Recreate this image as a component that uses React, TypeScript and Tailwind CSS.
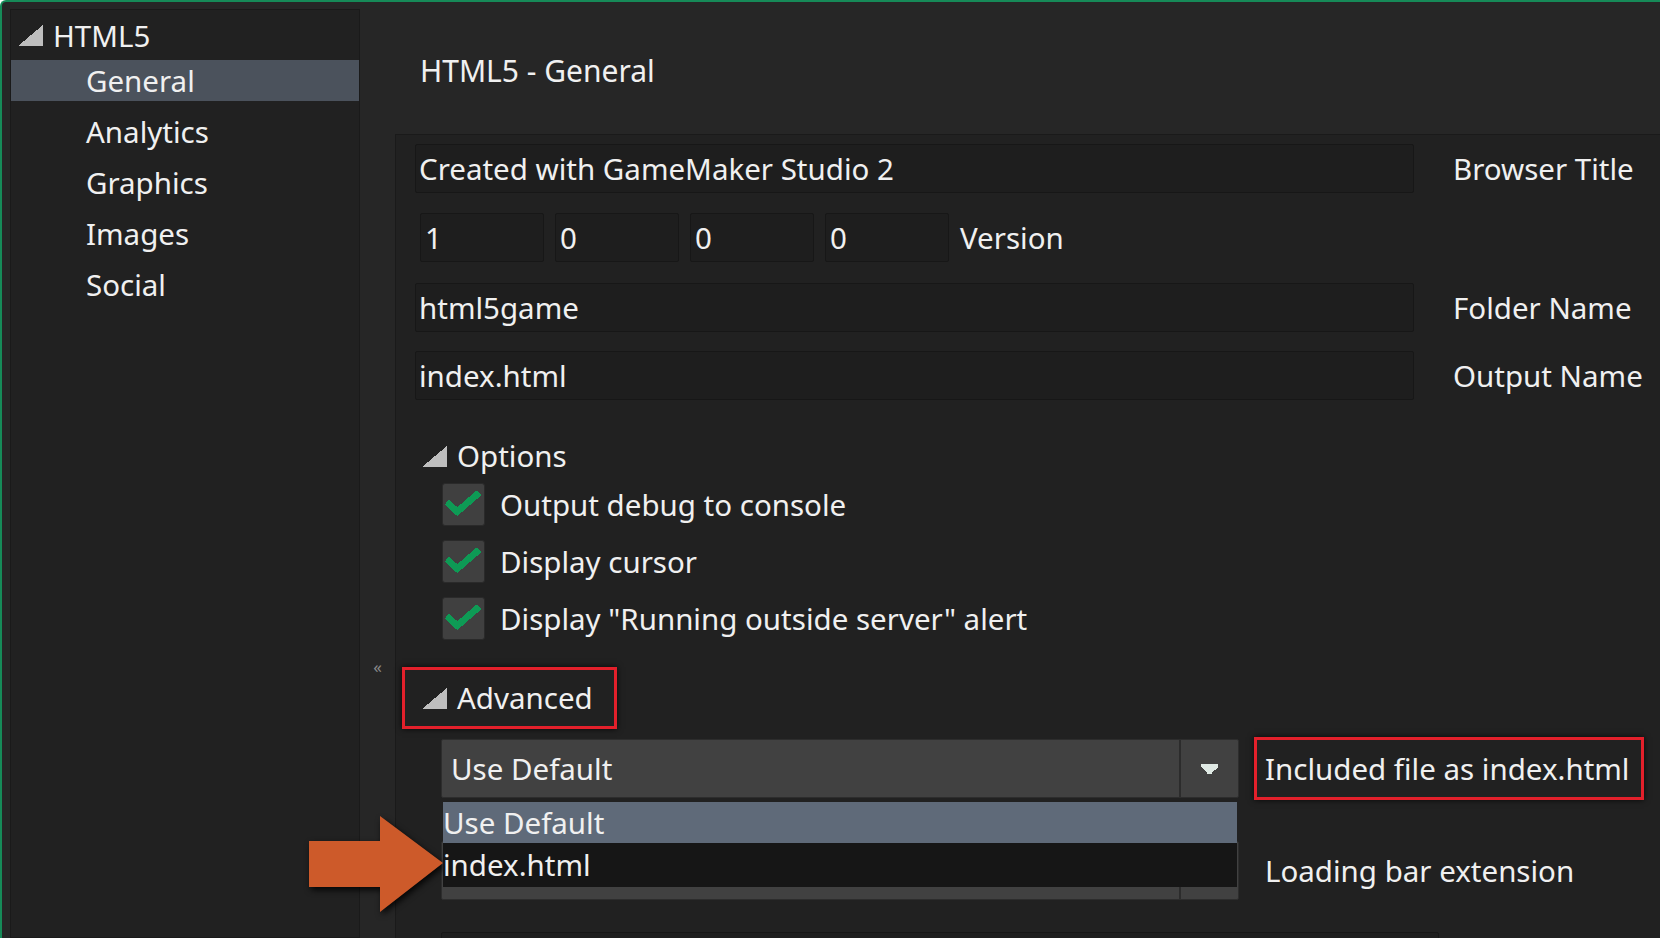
import React from 'react'

const font = { fontFamily: '"Noto Sans", "Open Sans", sans-serif' }

function Tri({ className = '' }: { className?: string }) {
  return (
    <svg width="25" height="21" viewBox="0 0 25 21" className={className} shapeRendering="crispEdges">
      <polygon points="0,21 25,0 25,21" fill="#bebebe" />
    </svg>
  )
}

function Check() {
  return (
    <div className="w-[43px] h-[43px] bg-[#404040] border border-[#2a2a2a] rounded-[3px] flex items-center justify-center shrink-0">
      <svg width="43" height="43" viewBox="0 0 43 43" shapeRendering="crispEdges">
        <polyline points="4,19 15,29 38,9" fill="none" stroke="#0e9a55" strokeWidth="7" strokeLinejoin="miter" />
      </svg>
    </div>
  )
}

function TextBox({ value, className = '' }: { value: string; className?: string }) {
  return (
    <div className={`h-[49px] bg-[#1e1e1e] border border-[#171717] rounded-[2px] flex items-center pl-[3px] text-[29.5px] leading-none text-[#f0f0f0] ${className}`}>
      {value}
    </div>
  )
}

function Dropdown({ value, children }: { value: string; children?: React.ReactNode }) {
  return (
    <div className="relative w-[798px] h-[59px] bg-[#414141] border border-[#2d2d2d] rounded-[2px] flex">
      <div className="flex-1 flex items-center pl-[9px] text-[29.5px] leading-none text-[#f0f0f0]">{value}</div>
      <div className="w-[59px] border-l-2 border-[#2c2c2c] flex items-center justify-center">
        <svg width="17" height="10" viewBox="0 0 17 10" shapeRendering="crispEdges">
          <polygon points="0,0 17,0 17,3 14,6 11,8 11,10 6,10 6,8 3,6 0,3" fill="#dfe9e4" />
        </svg>
      </div>
      {children}
    </div>
  )
}

const sideItems = ['General', 'Analytics', 'Graphics', 'Images', 'Social']

export default function App() {
  return (
    <div className="relative w-[1660px] h-[938px] overflow-hidden bg-[#262626] border-t-2 border-l-2 border-[#168a58] rounded-tl-[6px] flex text-[#f0f0f0]" style={font}>
      {/* sidebar */}
      <div className="ml-[8px] mt-[7px] w-[350px] bg-[#212121] border border-[#1a1a1a] pt-[5px] shrink-0">
        <div className="h-[41px] flex items-center pl-[7px] gap-[10px]">
          <Tri />
          <span className="text-[29.5px] leading-none">HTML5</span>
        </div>
        <div className="mt-[4px] flex flex-col gap-[10px]">
          {sideItems.map((s, i) => (
            <div key={s} className={`h-[41px] flex items-center pl-[75px] text-[29.5px] leading-none ${i === 0 ? 'bg-[#4b525c]' : ''}`}>
              {s}
            </div>
          ))}
        </div>
      </div>

      {/* collapse strip */}
      <div className="w-[35px] shrink-0 flex justify-center pt-[656px] text-[17px] text-[#8a8a8a] leading-none">«</div>

      {/* main */}
      <div className="flex-1 flex flex-col">
        <div className="h-[132px] flex items-center pl-[25px] pt-[6px] shrink-0">
          <span className="text-[30px] leading-none">HTML5 - General</span>
        </div>
        <div className="flex-1 bg-[#212121] border-t border-l border-[#1a1a1a]">
          <div className="flex items-center mt-[9px] ml-[19px]">
            <TextBox value="Created with GameMaker Studio 2" className="w-[999px]" />
            <span className="ml-[39px] text-[29.5px] leading-none">Browser Title</span>
          </div>

          <div className="flex items-center mt-[20px] ml-[24px] gap-[11px]">
            {['1', '0', '0', '0'].map((v, i) => (
              <TextBox key={i} value={v} className="w-[124px] pl-[4px]" />
            ))}
            <span className="text-[29.5px] leading-none">Version</span>
          </div>

          <div className="flex items-center mt-[21px] ml-[19px]">
            <TextBox value="html5game" className="w-[999px] h-[48px]" />
            <span className="ml-[39px] text-[29.5px] leading-none">Folder Name</span>
          </div>

          <div className="flex items-center mt-[19px] ml-[19px]">
            <TextBox value="index.html" className="w-[999px] h-[48px]" />
            <span className="ml-[39px] text-[29.5px] leading-none">Output Name</span>
          </div>

          <div className="h-[30px] flex items-center mt-[41px] ml-[26px] gap-[10px]">
            <Tri />
            <span className="text-[29.5px] leading-none">Options</span>
          </div>

          <div className="flex flex-col gap-[14px] mt-[12px] ml-[46px]">
            {['Output debug to console', 'Display cursor', 'Display "Running outside server" alert'].map(t => (
              <div key={t} className="flex items-center gap-[15px]">
                <Check />
                <span className="text-[29.5px] leading-none">{t}</span>
              </div>
            ))}
          </div>

          <div className="mt-[27px] ml-[6px] w-[215px] h-[62px] border-[3px] border-[#e3202b] shadow-[0_0_6px_rgba(0,0,0,0.8)] flex items-center pl-[17px] gap-[10px]">
            <Tri />
            <span className="text-[29.5px] leading-none">Advanced</span>
          </div>

          <div className="flex items-center mt-[8px] ml-[45px]">
            <Dropdown value="Use Default">
              <div className="absolute left-[1px] top-[62px] w-[794px] z-10 text-[29.5px] leading-none">
                <div className="h-[41px] bg-[#5f6a79] flex items-center">Use Default</div>
                <div className="h-[44px] bg-[#161616] flex items-center">index.html</div>
              </div>
            </Dropdown>
            <div className="ml-[15px] w-[390px] h-[63px] border-[3px] border-[#e3202b] shadow-[0_0_6px_rgba(0,0,0,0.8)] flex items-center pl-[8px] text-[29.5px] leading-none">
              Included file as index.html
            </div>
          </div>

          <div className="flex items-center mt-[41px] ml-[45px]">
            <Dropdown value="" />
            <span className="ml-[26px] text-[29.5px] leading-none">Loading bar extension</span>
          </div>

          <div className="mt-[32px] ml-[45px] w-[998px] h-[49px] bg-[#1e1e1e] border border-[#171717] rounded-[2px]" />
        </div>
      </div>

      {/* annotation arrow */}
      <svg className="absolute left-[298px] top-[806px] drop-shadow-[2px_3px_3px_rgba(0,0,0,0.85)]" width="150" height="112" viewBox="0 0 150 112">
        <polygon points="9,33 80,33 80,8 143,55 80,104 80,79 9,79" fill="#cd5a2a" />
      </svg>
    </div>
  )
}
